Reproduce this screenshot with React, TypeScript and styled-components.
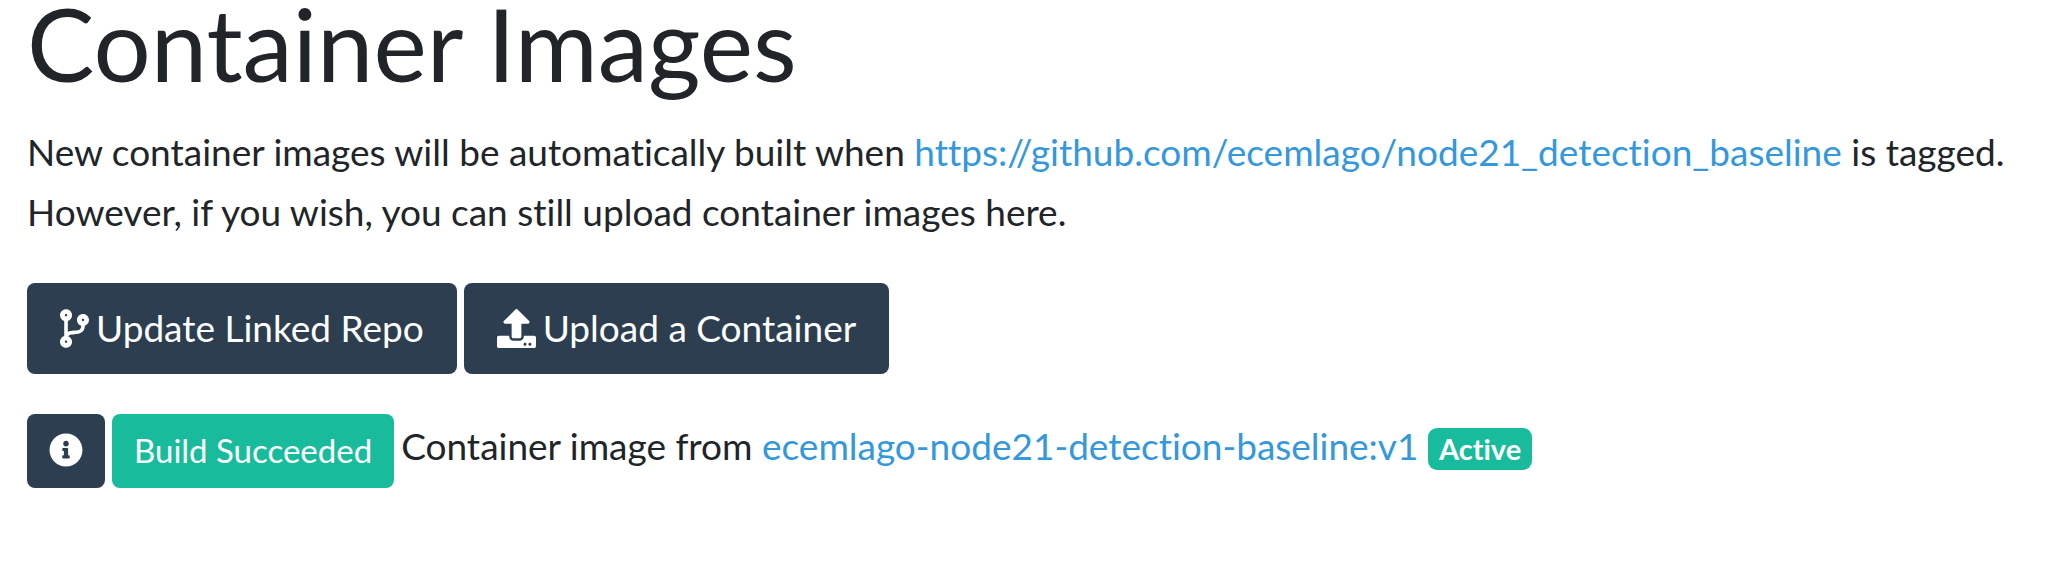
import React from 'react';
import styled, { createGlobalStyle } from 'styled-components';
import { FaUpload, FaInfoCircle } from 'react-icons/fa';

const GlobalStyle = createGlobalStyle`
  *, *::before, *::after { box-sizing: border-box; }
  body {
    margin: 0;
    background: #fff;
    color: #212529;
    font-family: Lato, "Liberation Sans", sans-serif;
    font-size: 37px;
    line-height: 60px;
    font-variant-ligatures: none;
  }
`;

const Page = styled.main`
  padding: 0 27px;
`;

const Title = styled.h1`
  margin: 0 0 35px;
  font-size: 101px;
  font-weight: 400;
  line-height: 87px;
`;

const Intro = styled.p`
  margin: 0 0 41px;
`;

const Link = styled.a`
  color: #3498db;
  text-decoration: none;
`;

const Actions = styled.div`
  display: flex;
  flex-wrap: wrap;
  gap: 7px;
  margin-bottom: 40px;
`;

const Button = styled.button<{ $small?: boolean; $success?: boolean }>`
  display: inline-flex;
  align-items: center;
  gap: 7px;
  padding: ${p => (p.$small ? '11px 22px 13px' : '15px 33px 16px')};
  border: 0;
  border-radius: 8px;
  background: ${p => (p.$success ? '#18bc9c' : '#2c3e50')};
  color: #fff;
  font-family: inherit;
  font-size: ${p => (p.$small ? '33px' : '37px')};
  font-variant-ligatures: none;
  line-height: ${p => (p.$small ? '50px' : '60px')};

  svg {
    height: ${p => (p.$small ? '50px' : '39px')};
    min-width: ${p => (p.$small ? '34px' : '29px')};
  }
`;

const ImageRow = styled.div`
  display: flex;
  flex-wrap: wrap;
  align-items: center;
  gap: 7px;
`;

const ImageText = styled.div`
  padding-bottom: 10px;
`;

const Badge = styled.span`
  display: inline-block;
  padding: 6px 11px;
  border-radius: 9px;
  background: #18bc9c;
  color: #fff;
  font-size: 29px;
  font-weight: 700;
  line-height: 30px;
`;

const BranchIcon = () => (
  <svg viewBox="0 0 384 512" width="29" height="39" fill="currentColor" aria-hidden="true">
    <path d="M384 144c0-44.2-35.8-80-80-80s-80 35.8-80 80c0 36.4 24.3 67.1 57.5 76.8-.6 16.1-4.2 28.5-11 36.9-15.4 19.2-49.3 22.4-85.2 25.7-28.2 2.6-57.4 5.4-81.3 16.9v-144c32.5-10.2 56-40.5 56-76.3 0-44.2-35.8-80-80-80S0 35.8 0 80c0 35.8 23.5 66.1 56 76.3v199.3C23.5 365.9 0 396.2 0 432c0 44.2 35.8 80 80 80s80-35.8 80-80c0-34-21.2-63.1-51.2-74.6 3.1-5.2 7.8-9.8 14.9-13.4 16.2-8.2 40.4-10.4 66.1-12.8 42.2-3.9 90-8.4 118.2-43.4 14-17.4 21.1-39.8 21.6-67.9 31.6-10.8 54.4-40.7 54.4-75.9zM80 64c8.8 0 16 7.2 16 16s-7.2 16-16 16-16-7.2-16-16 7.2-16 16-16zm0 384c-8.8 0-16-7.2-16-16s7.2-16 16-16 16 7.2 16 16-7.2 16-16 16zm224-320c8.8 0 16 7.2 16 16s-7.2 16-16 16-16-7.2-16-16 7.2-16 16-16z" />
  </svg>
);

export default function App() {
  return (
    <>
      <GlobalStyle />
      <Page>
        <Title>Container Images</Title>
        <Intro>
          New container images will be automatically built when{' '}
          <Link href="https://github.com/ecemlago/node21_detection_baseline">
            https://github.com/ecemlago/node21_detection_baseline
          </Link>{' '}
          is tagged. However, if you wish, you can still upload container images here.
        </Intro>
        <Actions>
          <Button type="button"><BranchIcon />Update Linked Repo</Button>
          <Button type="button"><FaUpload size={39} />Upload a Container</Button>
        </Actions>
        <ImageRow>
          <Button type="button" $small aria-label="Build information"><FaInfoCircle size={33} /></Button>
          <Button type="button" $small $success>Build Succeeded</Button>
          <ImageText>
            Container image from <Link href="#image">ecemlago-node21-detection-baseline:v1</Link>{' '}
            <Badge>Active</Badge>
          </ImageText>
        </ImageRow>
      </Page>
    </>
  );
}
